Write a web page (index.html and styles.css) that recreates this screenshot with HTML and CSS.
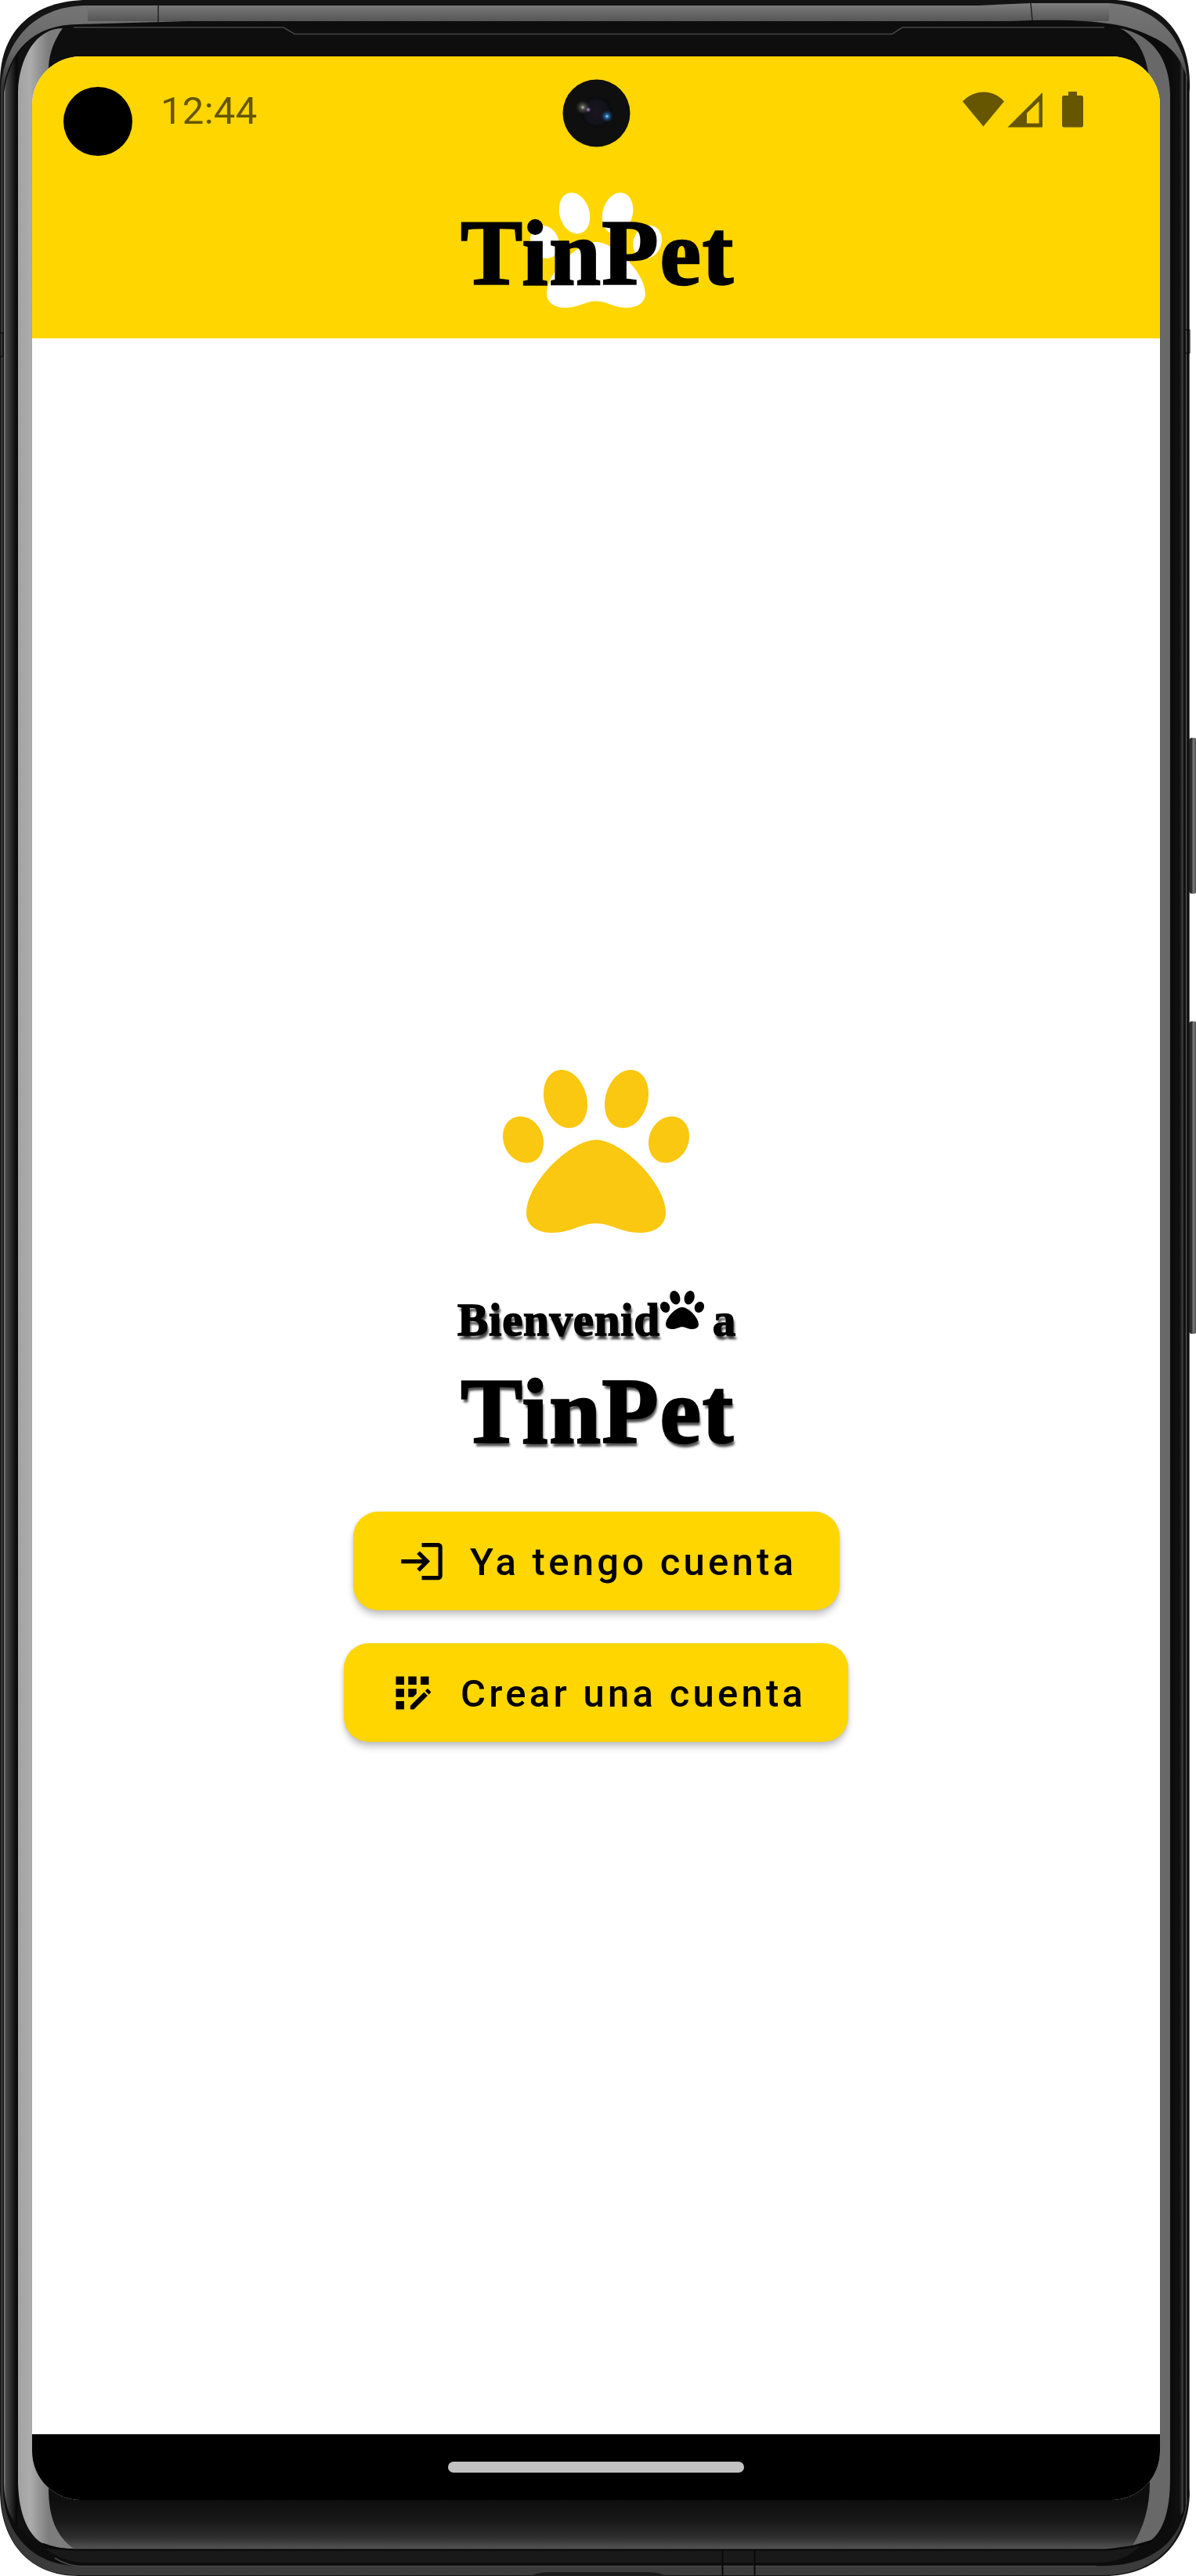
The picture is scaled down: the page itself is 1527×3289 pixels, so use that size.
FILE: index.html
```html
<!DOCTYPE html>
<html lang="es">
<head>
<meta charset="utf-8">
<title>TinPet</title>
<link rel="stylesheet" href="styles.css">
</head>
<body>
<svg class="defs" aria-hidden="true">
  <symbol id="paw" viewBox="246 107 714 625" preserveAspectRatio="none">
    <path d="M471 107C525 107 570 175 570 240C570 290 545 330 500 330C446 330 402 262 402 200C402 145 430 107 471 107Z"/>
    <path d="M735 107C681 107 636 175 636 240C636 290 661 330 706 330C760 330 804 262 804 200C804 145 776 107 735 107Z"/>
    <path d="M313 286C362 286 402 335 402 386C402 432 377 464 336 464C287 464 246 415 246 362C246 318 273 286 313 286Z"/>
    <path d="M893 286C844 286 804 335 804 386C804 432 829 464 870 464C919 464 960 415 960 362C960 318 933 286 893 286Z"/>
    <path d="M603 375C700 375 870 540 870 656C870 702 830 732 772 732C700 732 660 696 603 696C546 696 506 732 434 732C376 732 336 702 336 656C336 540 506 375 603 375Z"/>
  </symbol>
</svg>
<div class="device">
  <svg class="frame" viewBox="0 0 1527 3289" aria-hidden="true">
    <defs>
      <linearGradient id="band" gradientUnits="userSpaceOnUse" x1="0" y1="6" x2="0" y2="30">
        <stop offset="0" stop-color="#7b7b7b"/><stop offset="1" stop-color="#505050"/>
      </linearGradient>
      <linearGradient id="rim" gradientUnits="userSpaceOnUse" x1="0" y1="0" x2="0" y2="3289">
        <stop offset="0" stop-color="#777"/><stop offset=".02" stop-color="#666"/><stop offset=".034" stop-color="#333"/><stop offset=".97" stop-color="#333"/><stop offset="1" stop-color="#3c3c3c"/>
      </linearGradient>
      <linearGradient id="glass" gradientUnits="userSpaceOnUse" x1="0" y1="3192" x2="0" y2="3256">
        <stop offset="0" stop-color="#0e0e0e"/><stop offset=".4" stop-color="#171717"/><stop offset=".75" stop-color="#2e2e2e"/><stop offset="1" stop-color="#585858"/>
      </linearGradient>
      <linearGradient id="leftEdge" gradientUnits="userSpaceOnUse" x1="5" y1="0" x2="24" y2="0">
        <stop offset="0" stop-color="#909090"/><stop offset=".12" stop-color="#4a4a4a"/><stop offset=".5" stop-color="#292929"/><stop offset=".85" stop-color="#080808"/><stop offset="1" stop-color="#111"/>
      </linearGradient>
      <linearGradient id="rightEdge" gradientUnits="userSpaceOnUse" x1="1494" y1="0" x2="1519" y2="0">
        <stop offset="0" stop-color="#0b0b0b"/><stop offset=".5" stop-color="#111"/><stop offset=".64" stop-color="#444"/><stop offset=".68" stop-color="#111"/><stop offset=".8" stop-color="#111"/><stop offset=".82" stop-color="#555"/><stop offset=".88" stop-color="#0a0a0a"/><stop offset=".95" stop-color="#111"/><stop offset="1" stop-color="#999"/>
      </linearGradient>
      <linearGradient id="sheen" gradientUnits="userSpaceOnUse" x1="23" y1="0" x2="62" y2="0">
        <stop offset="0" stop-color="#a2a2a2"/><stop offset=".4" stop-color="#acacac"/><stop offset="1" stop-color="#7d7d7d"/>
      </linearGradient>
      <linearGradient id="key" gradientUnits="userSpaceOnUse" x1="1518" y1="0" x2="1527" y2="0">
        <stop offset="0" stop-color="#222"/><stop offset=".4" stop-color="#303030"/><stop offset=".6" stop-color="#777"/><stop offset="1" stop-color="#555"/>
      </linearGradient>
    </defs>
    <path d="M112 0H1420C1480 0 1519 42 1519 108V3180C1519 3248 1474 3289 1410 3289H100C38 3289 0 3246 0 3180V105C0 38 44 0 112 0Z" fill="#141414"/>
    <path d="M1 112C8 44 50 7 112 7H1300L1416 4C1478 8 1516 50 1517 112V3180C1516 3246 1474 3287 1410 3288H100C38 3288 1 3246 1 3180Z" fill="url(#rim)"/>
    <path d="M112 7H1250L1316 4H1416V27H112Z" fill="url(#band)"/>
    <path d="M4 118C10 64 44 31 100 31L240 27H1290C1450 20 1500 40 1516 118V3176C1516 3236 1480 3275 1410 3276H100C42 3276 4 3234 4 3176Z" fill="#0d0d0d"/>
    <path d="M202 7V29M1316 4L1318 26" stroke="#222" stroke-width="1.5"/>
    <path d="M5 118C12 70 40 38 80 36H110V3254C40 3254 5 3230 5 3168Z" fill="url(#leftEdge)"/>
    <path d="M1430 36C1490 45 1512 70 1519 118V3176C1516 3220 1480 3254 1400 3255V36Z" fill="url(#rightEdge)"/>
    <rect x="1518" y="942" width="10" height="199" rx="4" fill="url(#key)"/>
    <rect x="1518" y="1304" width="10" height="399" rx="4" fill="url(#key)"/>
    <path d="M60 3170H1468C1465 3215 1455 3240 1446 3250L1410 3255H94C70 3240 62 3210 60 3170Z" fill="url(#glass)"/>
    <path d="M80 36H1430L1470 80V3192H60V80Z" fill="#0e0e0e"/>
    <path d="M80 36C46 36 24 74 23 118V3170C24 3210 36 3235 52 3246C64 3252 78 3254 94 3254C72 3238 62 3215 62 3176V86C63 66 70 50 80 36Z" fill="url(#sheen)"/>
    <path d="M1430 36C1472 45 1493 75 1494 120V3164C1494 3208 1484 3232 1470 3243L1446 3250C1460 3228 1468 3200 1468 3170V110C1466 76 1456 50 1430 36Z" fill="#686868"/>
    <path d="M94 35H362L376 43.500H1139L1152 35H1410" fill="none" stroke="#454545" stroke-width="1.500"/>
    <path d="M55 3248C70 3254 80 3255.500 94 3255.500H1410C1440 3255 1460 3250 1472 3243" fill="none" stroke="#080808" stroke-width="2"/>
    <path d="M100 3257H1400C1424 3257 1442 3254 1456 3250C1440 3266 1424 3272 1400 3272H110C90 3272 70 3264 58 3254Z" fill="#191919"/>
    <path d="M70 3266C84 3275 96 3276.500 110 3276.500H1400" fill="none" stroke="#4a4a4a" stroke-width="1.500"/>
    <path d="M677 3289C690 3284 694 3284 710 3284H820C836 3284 840 3284 850 3289Z" fill="#1b1a1b"/>
    <path d="M922.500 3257V3289M963.500 3257V3289" stroke="#0a0a0a" stroke-width="2"/>
    <path d="M0 425H4V455H0M1513 421H1519V451H1513" fill="none" stroke="#050505"/>
  </svg>
  <main class="screen">
    <header class="app-header">
      <div class="status-bar">
        <span class="cutout"></span>
        <time class="clock">12:44</time>
        <svg class="camera" viewBox="0 0 88 88" aria-hidden="true">
          <defs>
            <radialGradient id="lens"><stop offset="0" stop-color="#1c141c"/><stop offset=".7" stop-color="#12131c"/><stop offset="1" stop-color="#0a0a0c"/></radialGradient>
            <radialGradient id="glowWarm"><stop offset="0" stop-color="#d8d8c8"/><stop offset=".25" stop-color="#7d7d70" stop-opacity=".7"/><stop offset="1" stop-color="#444436" stop-opacity="0"/></radialGradient>
            <radialGradient id="glowBlue"><stop offset="0" stop-color="#bfe8ff"/><stop offset=".25" stop-color="#2674b0"/><stop offset="1" stop-color="#102c50" stop-opacity="0"/></radialGradient>
            <radialGradient id="glowPink"><stop offset="0" stop-color="#e4a4e0"/><stop offset="1" stop-color="#302870" stop-opacity="0"/></radialGradient>
          </defs>
          <circle cx="43.500" cy="44.500" r="43" fill="#0f0f0f"/>
          <circle cx="43.500" cy="43" r="20" fill="url(#lens)"/>
          <circle cx="26" cy="37" r="9" fill="url(#glowWarm)"/>
          <circle cx="57" cy="48.500" r="8" fill="url(#glowBlue)"/>
          <circle cx="33" cy="40" r="4" fill="url(#glowPink)"/>
        </svg>
        <svg class="status-icons" viewBox="0 0 156 48" aria-hidden="true">
          <path d="M0 12.500C15-3.500 39-3.500 53 12.500L26.500 44.500Z"/>
          <path fill-rule="evenodd" d="M57.500 45.500L102 1V45.500ZM82 40.500H97.500V12.500L82 27.500Z"/>
          <path d="M135 0H146V5H151.500Q154 5 154 7.500V43Q154 45.500 151.500 45.500H129.500Q127 45.500 127 43V7.500Q127 5 129.500 5H135Z"/>
        </svg>
      </div>
      <div class="logo">
        <svg class="logo-paw"><use href="#paw"/></svg>
        <span class="brand">TinPet</span>
      </div>
    </header>
    <section class="welcome">
      <svg class="hero-paw"><use href="#paw"/></svg>
      <h1 class="title">
        <span class="greeting"><span>Bienvenid</span><svg class="inline-paw"><use href="#paw"/></svg><span>a</span></span>
        <span class="brand brand-shadow">TinPet</span>
      </h1>
      <div class="actions">
        <button class="button button-login">
          <svg class="icon" viewBox="0 0 24 24"><path d="M11 7L9.600 8.400l2.600 2.600H2v2h10.200l-2.600 2.600L11 17l5-5-5-5zM20 19h-8v2h8c1.100 0 2-.9 2-2V5c0-1.100-.9-2-2-2h-8v2h8v14z"/></svg>
          <span class="label">Ya tengo cuenta</span>
        </button>
        <button class="button button-register">
          <svg class="icon" viewBox="0 0 24 24"><path d="M10 4h4v4h-4zM4 16h4v4H4zM4 10h4v4H4zM4 4h4v4H4zM14 12.420V10h-4v4h2.420zM20.880 11.290l-1.170-1.170c-.16-.16-.42-.16-.58 0l-.88.88L20 12.750l.88-.88c.16-.16.16-.42 0-.58zM11 18.250V20h1.750l6.670-6.670-1.750-1.750zM16 4h4v4h-4z"/></svg>
          <span class="label">Crear una cuenta</span>
        </button>
      </div>
    </section>
    <nav class="nav-bar"><span class="home-pill"></span></nav>
  </main>
</div>
</body>
</html>
```

FILE: styles.css
```css
* { box-sizing: border-box; }

body {
  margin: 0;
  background: #fff;
  color: #000;
  font-family: Roboto, "Liberation Sans", sans-serif;
}

svg { display: block; flex: none; }

.defs { position: absolute; width: 0; height: 0; }

.device {
  position: relative;
  width: 1527px;
  height: 3289px;
  padding: 72px 46px 97px 41px;
  overflow: hidden;
}

.frame { position: absolute; inset: 0; width: 1527px; height: 3289px; }

.screen {
  position: relative;
  display: flex;
  flex-direction: column;
  width: 1440px;
  height: 3120px;
  border-radius: 62px;
  overflow: hidden;
  background: #fff;
}

.app-header {
  display: flex;
  flex-direction: column;
  align-items: center;
  height: 360px;
  background: #ffd600;
}

.status-bar {
  display: flex;
  align-items: flex-start;
  width: 100%;
  height: 174px;
  padding: 28px 96px 0 40px;
}

.cutout {
  width: 88px;
  height: 88px;
  margin-top: 11px;
  border-radius: 50%;
  background: #000;
}

.clock {
  width: 124px;
  margin: 13px 0 0 36px;
  color: #665600;
  font-size: 49px;
  line-height: 57px;
  letter-spacing: .3px;
  white-space: nowrap;
}

.camera { width: 88px; height: 88px; margin-left: 389px; }

.status-icons {
  width: 156px;
  height: 48px;
  margin: 17px 0 0 423px;
  fill: #665600;
}

.logo { display: grid; justify-items: center; }
.logo > * { grid-area: 1 / 1; }

.logo-paw { width: 168px; height: 147px; fill: #fff; }

.brand {
  z-index: 1;
  margin-top: 12px;
  padding-left: 4px;
  font: bold 118px/131px "Liberation Serif", serif;
  letter-spacing: 1.800px;
  -webkit-text-stroke: 2.500px #000;
}

.welcome {
  display: flex;
  flex: 1;
  flex-direction: column;
  align-items: center;
  padding-top: 934px;
}

.hero-paw { width: 238px; height: 208px; fill: #fac711; }

.title {
  display: flex;
  flex-direction: column;
  align-items: center;
  height: 356px;
  margin: 0;
  padding-top: 74px;
}

.greeting {
  display: flex;
  height: 77px;
  padding-left: 2px;
  font: bold 59px/74px "Liberation Serif", serif;
  letter-spacing: .7px;
  text-shadow: 2px 5px 3px rgba(0, 0, 0, .75);
  -webkit-text-stroke: 1.500px #000;
}

.inline-paw { width: 56px; height: 49px; margin-right: 11px; }

.brand-shadow { text-shadow: 2px 5px 3px rgba(0, 0, 0, .7); }

.actions {
  display: flex;
  flex-direction: column;
  align-items: flex-start;
  gap: 42px;
}

.button {
  display: flex;
  align-items: center;
  gap: 30px;
  height: 126px;
  padding: 0 0 0 56px;
  border: 0;
  border-radius: 32px;
  background: #ffd600;
  box-shadow: 0 7px 9px rgba(0, 0, 0, .2), 0 1px 4px rgba(0, 0, 0, .1);
  color: #000;
  font: 500 49px/57px Roboto, "Liberation Sans", sans-serif;
  letter-spacing: 4.250px;
  white-space: nowrap;
}

.button-login { width: 621px; margin-left: 12px; }
.button-register { width: 644px; }

.icon { width: 63px; height: 63px; }
.label { padding-top: 2px; }

.nav-bar {
  display: flex;
  align-items: center;
  justify-content: center;
  height: 84px;
  background: #000;
}

.home-pill {
  width: 378px;
  height: 14px;
  border-radius: 7px;
  background: #c2c2c2;
}
```
